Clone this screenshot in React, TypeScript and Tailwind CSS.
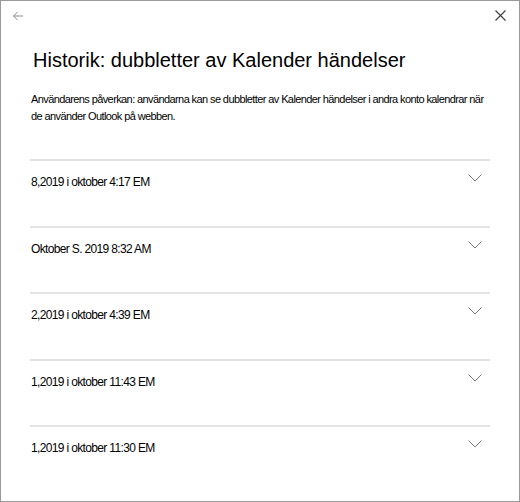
import React from "react";

const rows = [
  "8,2019 i oktober 4:17 EM",
  "Oktober S. 2019 8:32 AM",
  "2,2019 i oktober 4:39 EM",
  "1,2019 i oktober 11:43 EM",
  "1,2019 i oktober 11:30 EM",
];

function Chevron() {
  return (
    <svg width="14" height="8" viewBox="0 0 14 8" fill="none">
      <path d="M0.5 0.5 L7 7 L13.5 0.5" stroke="#7a7a7a" strokeWidth="1" />
    </svg>
  );
}

export default function App() {
  return (
    <div
      className="w-[520px] h-[502px] bg-white border border-[#9a9a9a] flex flex-col text-[#1b1b1b]"
      style={{ fontFamily: '"Liberation Sans", Arial, sans-serif' }}
    >
      <div className="flex justify-between items-start h-[30px]">
        <div className="pl-[11px] pt-[9px]">
          <svg width="12" height="12" viewBox="0 0 12 12" fill="none">
            <path d="M11 6 H1.5 M5.5 2 L1.5 6 L5.5 10" stroke="#8a8a8a" strokeWidth="1" />
          </svg>
        </div>
        <div className="pr-[13px] pt-[9px]">
          <svg width="11" height="11" viewBox="0 0 11 11" fill="none">
            <path d="M0.5 0.5 L10.5 10.5 M10.5 0.5 L0.5 10.5" stroke="#3a3a3a" strokeWidth="1.1" />
          </svg>
        </div>
      </div>
      <h1 className="pl-[32px] mt-[15px] text-[20px] leading-[28px] text-black">
        Historik: dubbletter av Kalender händelser
      </h1>
      <p className="pl-[30px] pr-[28px] mt-[17px] text-[11px] leading-[17px] tracking-[-0.6px] text-black">
        Användarens påverkan: användarna kan se dubbletter av Kalender händelser i andra konto kalendrar när de använder Outlook på webben.
      </p>
      <div className="mt-[34px] px-[29px]">
        {rows.map((r) => (
          <div key={r} className="border-t-2 border-[#e3e3e3] h-[66.5px] flex justify-between items-start">
            <span className="pl-[1px] pt-[12px] text-[12px] tracking-[-0.65px] text-black">{r}</span>
            <span className="pr-[8px] pt-[13px]">
              <Chevron />
            </span>
          </div>
        ))}
      </div>
    </div>
  );
}
